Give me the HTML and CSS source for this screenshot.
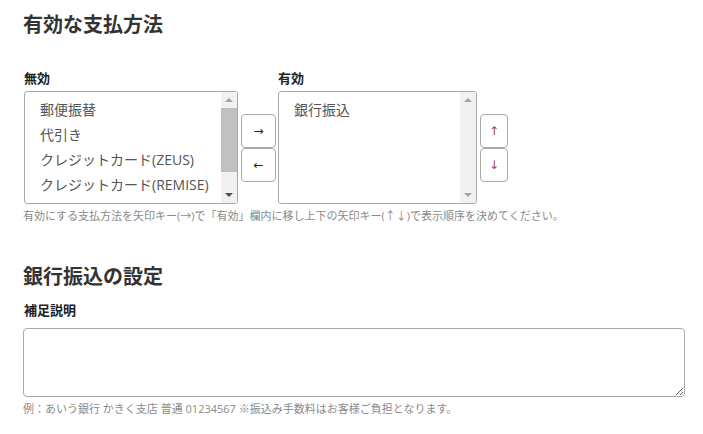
FILE: index.html
```html
<!DOCTYPE html>
<html lang="ja">
<head>
<meta charset="utf-8">
<title>支払方法</title>
<link rel="stylesheet" href="styles.css">
</head>
<body>
<div class="page">
  <h2 class="title">有効な支払方法</h2>
  <div class="picker">
    <div class="group group-off">
      <div class="label">無効</div>
      <div class="listbox">
        <div class="items">
          <div class="item">郵便振替</div>
          <div class="item">代引き</div>
          <div class="item">クレジットカード(ZEUS)</div>
          <div class="item">クレジットカード(REMISE)</div>
        </div>
        <div class="sbar">
          <div class="sarrow"><span class="tri up dim"></span></div>
          <div class="strack"><div class="thumb"></div></div>
          <div class="sarrow"><span class="tri down"></span></div>
        </div>
      </div>
    </div>
    <div class="btns btns-move">
      <button class="btn">→</button>
      <button class="btn">←</button>
    </div>
    <div class="group group-on">
      <div class="label">有効</div>
      <div class="listbox">
        <div class="items">
          <div class="item">銀行振込</div>
        </div>
        <div class="sbar">
          <div class="sarrow"><span class="tri up dim"></span></div>
          <div class="strack"></div>
          <div class="sarrow"><span class="tri down dim"></span></div>
        </div>
      </div>
    </div>
    <div class="btns btns-order">
      <button class="btn btn-red">↑</button>
      <button class="btn btn-red">↓</button>
    </div>
  </div>
  <p class="help">有効にする支払方法を矢印キー(→)で「有効」欄内に移し上下の矢印キー(↑↓)で表示順序を決めてください。</p>

  <h2 class="title title2">銀行振込の設定</h2>
  <div class="label label2">補足説明</div>
  <textarea class="note"></textarea>
  <p class="help help2">例：あいう銀行 かきく支店 普通 01234567 ※振込み手数料はお客様ご負担となります。</p>
</div>
</body>
</html>
```
FILE: styles.css
```css
* { box-sizing: border-box; }
html, body { margin: 0; background: #fff; }
body {
  font-family: "Open Sans", "Noto Sans CJK JP", sans-serif;
  color: #333;
}
.page {
  padding: 13px 18px 0 24px;
}
.title {
  margin: 0 0 0 -1px;
  font-size: 20px;
  line-height: 24px;
  font-weight: bold;
  color: #333;
}
.label {
  font-size: 13px;
  line-height: 18px;
  font-weight: bold;
  color: #222;
  margin-bottom: 4px;
}
.picker {
  display: flex;
  align-items: flex-end;
  margin-top: 32px;
}
.group-off { width: 214px; }
.group-on { width: 199px; margin-left: 2px; }
.listbox {
  display: flex;
  height: 113px;
  border: 1px solid #aaa;
  border-radius: 3px;
  overflow: hidden;
  background: #fff;
}
.items {
  flex: 1;
  padding: 5px 0 0 15px;
  overflow: hidden;
}
.item {
  font-size: 14px;
  line-height: 25px;
  color: #555;
  white-space: nowrap;
}
.sbar {
  width: 16px;
  display: flex;
  flex-direction: column;
  background: #f1f1f1;
}
.sarrow {
  height: 16px;
  display: flex;
  align-items: center;
  justify-content: center;
}
.strack { flex: 1; display: flex; flex-direction: column; }
.thumb {
  height: 64px;
  background: #c1c1c1;
}
.tri {
  width: 0; height: 0;
  border-left: 4px solid transparent;
  border-right: 4px solid transparent;
}
.tri.up { border-bottom: 4px solid #505050; }
.tri.down { border-top: 4px solid #505050; }
.tri.up.dim { border-bottom-color: #a3a3a3; }
.tri.down.dim { border-top-color: #a3a3a3; }
.btns {
  height: 113px;
  display: flex;
  flex-direction: column;
  justify-content: center;
}
.btns-move { margin-left: 3px; width: 35px; }
.btns-order { margin-left: 3px; width: 28px; }
.btn {
  height: 34px;
  width: 100%;
  padding: 0;
  border: 1px solid #aaa;
  border-radius: 4px;
  background: #fff;
  font-family: "DejaVu Sans", sans-serif;
  font-size: 12px;
  color: #222;
}
.btn-red { color: #a8433a; }
.help {
  margin: 4px 0 0 -1px;
  font-size: 11px;
  line-height: 16px;
  color: #8a8a8a;
}
.title2 { margin-top: 41px; }
.label2 { margin-top: 12px; margin-bottom: 9px; }
.note {
  display: block;
  width: 662px;
  height: 69px;
  margin-left: -1px;
  border: 1px solid #aaa;
  border-radius: 4px;
  resize: vertical;
  font-family: inherit;
}
.help2 { margin-top: 4px; }
```
